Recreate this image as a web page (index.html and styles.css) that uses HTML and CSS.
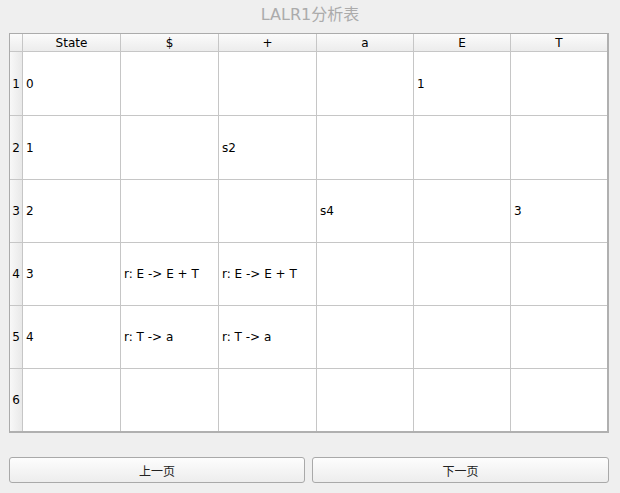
FILE: index.html
```html
<!DOCTYPE html>
<html>
<head>
<meta charset="utf-8">
<link rel="stylesheet" href="styles.css">
</head>
<body>
<div class="title">LALR1分析表</div>
<div class="grid">
  <div class="corner"></div>
  <div class="hcell">State</div>
  <div class="hcell">$</div>
  <div class="hcell">+</div>
  <div class="hcell">a</div>
  <div class="hcell">E</div>
  <div class="hcell">T</div>

  <div class="rhead">1</div>
  <div class="cell">0</div><div class="cell"></div><div class="cell"></div><div class="cell"></div><div class="cell">1</div><div class="cell"></div>

  <div class="rhead">2</div>
  <div class="cell">1</div><div class="cell"></div><div class="cell">s2</div><div class="cell"></div><div class="cell"></div><div class="cell"></div>

  <div class="rhead">3</div>
  <div class="cell">2</div><div class="cell"></div><div class="cell"></div><div class="cell">s4</div><div class="cell"></div><div class="cell">3</div>

  <div class="rhead">4</div>
  <div class="cell">3</div><div class="cell">r: E -&gt; E + T</div><div class="cell">r: E -&gt; E + T</div><div class="cell"></div><div class="cell"></div><div class="cell"></div>

  <div class="rhead">5</div>
  <div class="cell">4</div><div class="cell">r: T -&gt; a</div><div class="cell">r: T -&gt; a</div><div class="cell"></div><div class="cell"></div><div class="cell"></div>

  <div class="rhead">6</div>
  <div class="cell"></div><div class="cell"></div><div class="cell"></div><div class="cell"></div><div class="cell"></div><div class="cell"></div>
</div>
<div class="buttons">
  <button class="btn">上一页</button>
  <button class="btn">下一页</button>
</div>
</body>
</html>
```

FILE: styles.css
```css
html, body {
  margin: 0;
  padding: 0;
  background: #efefef;
  font-family: "DejaVu Sans", "Noto Sans CJK SC", sans-serif;
  font-size: 12px;
  color: #000;
}

.title {
  height: 33px;
  line-height: 29px;
  text-align: center;
  font-size: 16px;
  color: #ababab;
}

.grid {
  margin-left: 9px;
  width: 600px;
  box-sizing: border-box;
  display: grid;
  grid-template-columns: 12px 97px 97px 97px 96px 96px 96px;
  grid-template-rows: 17px 63px 63px 62px 62px 62px 62px;
  gap: 1px;
  background: #c6c6c6;
  border-top: 1px solid #ababab;
  border-left: 1px solid #ababab;
  border-right: 2px solid #b0b0b0;
  border-bottom: 2px solid #b0b0b0;
}

.corner,
.hcell {
  background: linear-gradient(to bottom, #fbfbfb, #ececec);
}

.hcell {
  display: flex;
  align-items: center;
  justify-content: center;
  padding-top: 1px;
  box-sizing: border-box;
}

.rhead {
  background: linear-gradient(to right, #f8f8f8, #e9e9e9);
  display: flex;
  align-items: center;
  justify-content: center;
}

.cell {
  background: #fff;
  display: flex;
  align-items: center;
  padding-left: 3px;
  white-space: nowrap;
}

.buttons {
  margin: 24px 0 0 9px;
  width: 600px;
  display: grid;
  grid-template-columns: 296px 297px;
  gap: 7px;
}

.btn {
  height: 26px;
  border: 1px solid #a9a9a9;
  border-radius: 3px;
  background: linear-gradient(to bottom, #fdfdfd, #ededed);
  font-family: "Noto Sans CJK SC", "DejaVu Sans", sans-serif;
  font-size: 12px;
  color: #222;
  padding: 0;
}
```
